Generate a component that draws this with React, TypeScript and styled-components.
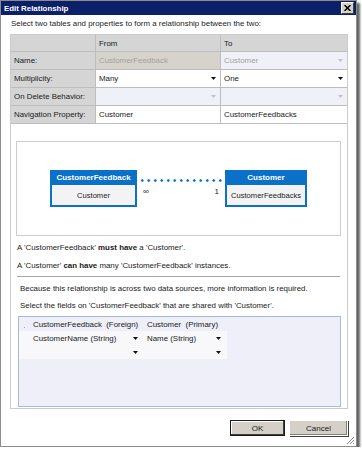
import React from 'react';
import styled, { createGlobalStyle } from 'styled-components';

const GlobalStyle = createGlobalStyle`
  html, body {
    margin: 0;
    padding: 0;
    background: #ffffff;
  }
  body {
    font-family: "Liberation Sans", Arial, sans-serif;
    font-size: 7.9px;
    color: #1a1a1a;
  }
`;

const Window = styled.div`
  width: 355px;
  height: 445px;
  background: #ffffff;
  border: 1px solid #8c8c8c;
  box-shadow: 3px 3px 2px rgba(0, 0, 0, 0.6);
  display: flex;
  flex-direction: column;
`;

const TitleBar = styled.div`
  height: 16px;
  background: #0b2068;
  color: #ffffff;
  font-weight: bold;
  font-size: 7.9px;
  display: flex;
  align-items: center;
  justify-content: space-between;
  padding: 0 2px 0 3px;
`;

const CloseButton = styled.div`
  width: 11px;
  height: 10px;
  background: #d4d0c8;
  border-top: 1px solid #ffffff;
  border-left: 1px solid #ffffff;
  border-right: 1px solid #404040;
  border-bottom: 1px solid #404040;
  display: flex;
  align-items: center;
  justify-content: center;
`;

const Body = styled.div`
  flex: 1;
  display: flex;
  flex-direction: column;
  padding: 0 8px 0 9px;
`;

const Intro = styled.div`
  line-height: 12px;
  margin-top: 3px;
  padding-left: 1px;
`;

const Panel = styled.div`
  margin-top: 4px;
  height: 373px;
  border: 1px solid #cbcbcb;
  display: flex;
  flex-direction: column;
`;

const PropTable = styled.div`
  display: grid;
  grid-template-columns: 85px 125px 1fr;
  grid-template-rows: 17px repeat(4, 18px);
`;

type Tone = 'head' | 'disabled' | 'readonly' | 'white';

const toneBg: Record<Tone, string> = {
  head: '#d5d5d5',
  disabled: '#d6d3cc',
  readonly: '#f0f0f8',
  white: '#ffffff',
};

const Cell = styled.div<{ $tone: Tone; $muted?: boolean }>`
  background: ${(p) => toneBg[p.$tone]};
  color: ${(p) => (p.$muted ? '#a3a19b' : '#1a1a1a')};
  border-right: 1px solid #bdbdbd;
  border-bottom: 1px solid #bdbdbd;
  display: flex;
  align-items: center;
  justify-content: space-between;
  padding: 0 4px 0 3px;
  white-space: nowrap;
  &:nth-child(3n) {
    border-right: none;
  }
`;

const Diagram = styled.div`
  margin: 17px 6px 0 5px;
  height: 93px;
  border: 1px solid #cdcdcd;
  display: flex;
  align-items: center;
  justify-content: center;
`;

const Entity = styled.div<{ $width: number }>`
  width: ${(p) => p.$width}px;
  height: 35px;
  background: #0a70c8;
  padding: 0 2px 2px;
  display: flex;
  flex-direction: column;
`;

const EntityTitle = styled.div`
  height: 15px;
  color: #ffffff;
  font-weight: bold;
  font-size: 8px;
  display: flex;
  align-items: center;
  justify-content: center;
`;

const EntityBody = styled.div`
  flex: 1;
  background: #f3f3f3;
  display: flex;
  align-items: center;
  justify-content: center;
  font-size: 7.6px;
  white-space: nowrap;
`;

const Connector = styled.div`
  width: 88px;
  height: 35px;
  display: flex;
  flex-direction: column;
  padding-top: 16px;
`;

const DottedLine = styled.div`
  height: 3px;
  background-image: radial-gradient(circle, #0a70c8 1px, transparent 1.5px);
  background-size: 6.5px 3px;
  background-repeat: repeat-x;
  background-position: 2px 0;
`;

const EndLabels = styled.div`
  display: flex;
  justify-content: space-between;
  padding: 5px 6px 0 6px;
  font-size: 8px;
`;

const Statement = styled.div`
  line-height: 12px;
  margin-left: 6px;
`;

const StatementGroup = styled.div`
  margin-top: 6px;
  display: flex;
  flex-direction: column;
  gap: 6px;
`;

const Separator = styled.div`
  margin: 4px 7px 0 6px;
  border-top: 1px solid #a8a8a8;
`;

const InfoGroup = styled.div`
  margin-top: 6px;
  margin-left: 9px;
  display: flex;
  flex-direction: column;
  gap: 6px;
  line-height: 11px;
`;

const MappingGrid = styled.div`
  margin: 5px 6px 0 7px;
  height: 89px;
  background: #eeeff8;
  border: 1px solid #a8bad6;
  display: grid;
  grid-template-columns: 11px 114px 83px 1fr;
  grid-template-rows: 14px 14px 14px 1fr;
`;

const MapCell = styled.div<{ $row?: boolean }>`
  background: ${(p) => (p.$row ? '#f8f8fb' : 'transparent')};
  display: flex;
  align-items: center;
  justify-content: space-between;
  padding: 0 6px 0 3px;
  white-space: nowrap;
`;

const CornerDot = styled.div`
  display: flex;
  align-items: flex-end;
  justify-content: center;
  padding-bottom: 3px;
  &::after {
    content: '';
    width: 1px;
    height: 1px;
    background: #9aa0b0;
  }
`;

const Footer = styled.div`
  display: flex;
  justify-content: flex-end;
  gap: 4px;
  margin-top: 11px;
`;

const DialogButton = styled.div<{ $primary?: boolean }>`
  width: ${(p) => (p.$primary ? 55 : 59)}px;
  height: 16px;
  box-sizing: border-box;
  background: #d4d0c8;
  border: 1px solid ${(p) => (p.$primary ? '#1a1a1a' : '#ffffff')};
  box-shadow: ${(p) =>
    p.$primary
      ? 'inset -1px -1px 0 #404040, inset 1px 1px 0 #ffffff'
      : '1px 1px 0 #404040, inset -1px -1px 0 #808080'};
  display: flex;
  align-items: center;
  justify-content: center;
  font-size: 8px;
`;

const GripRow = styled.div`
  flex: 1;
  display: flex;
  justify-content: flex-end;
  align-items: flex-end;
  padding: 0 0 1px 0;
  margin-right: -7px;
`;

const Arrow = ({ faint }: { faint?: boolean }) => (
  <svg width="5" height="3" viewBox="0 0 5 3">
    <path d="M0 0 H5 L2.5 3 Z" fill={faint ? '#c0c0c8' : '#111111'} />
  </svg>
);

const Grip = () => (
  <svg width="9" height="9" viewBox="0 0 9 9">
    <path d="M8 1 L1 8 M8 4 L4 8 M8 7 L7 8" stroke="#8a8a8a" strokeWidth="1" />
  </svg>
);

function App() {
  return (
    <>
      <GlobalStyle />
      <Window>
        <TitleBar>
          <span>Edit Relationship</span>
          <CloseButton>
            <svg width="7" height="6" viewBox="0 0 7 6">
              <path d="M0.5 0 L6.5 6 M6.5 0 L0.5 6" stroke="#000" strokeWidth="1.5" />
            </svg>
          </CloseButton>
        </TitleBar>
        <Body>
          <Intro>Select two tables and properties to form a relationship between the two:</Intro>
          <Panel>
            <PropTable>
              <Cell $tone="head" />
              <Cell $tone="head">From</Cell>
              <Cell $tone="head">To</Cell>

              <Cell $tone="head">Name:</Cell>
              <Cell $tone="disabled" $muted>CustomerFeedback</Cell>
              <Cell $tone="readonly" $muted>
                Customer <Arrow faint />
              </Cell>

              <Cell $tone="head">Multiplicity:</Cell>
              <Cell $tone="white">
                Many <Arrow />
              </Cell>
              <Cell $tone="white">
                One <Arrow />
              </Cell>

              <Cell $tone="head">On Delete Behavior:</Cell>
              <Cell $tone="readonly">
                <span /> <Arrow faint />
              </Cell>
              <Cell $tone="readonly">
                <span /> <Arrow faint />
              </Cell>

              <Cell $tone="head">Navigation Property:</Cell>
              <Cell $tone="white">Customer</Cell>
              <Cell $tone="white">CustomerFeedbacks</Cell>
            </PropTable>

            <Diagram>
              <Entity $width={83}>
                <EntityTitle>CustomerFeedback</EntityTitle>
                <EntityBody>Customer</EntityBody>
              </Entity>
              <Connector>
                <DottedLine />
                <EndLabels>
                  <span>∞</span>
                  <span>1</span>
                </EndLabels>
              </Connector>
              <Entity $width={78}>
                <EntityTitle>Customer</EntityTitle>
                <EntityBody>CustomerFeedbacks</EntityBody>
              </Entity>
            </Diagram>

            <StatementGroup>
              <Statement>
                A 'CustomerFeedback' <b>must have</b> a 'Customer'.
              </Statement>
              <Statement>
                A 'Customer' <b>can have</b> many 'CustomerFeedback' instances.
              </Statement>
            </StatementGroup>

            <Separator />

            <InfoGroup>
              <div>Because this relationship is across two data sources, more information is required.</div>
              <div>Select the fields on 'CustomerFeedback' that are shared with 'Customer'.</div>
            </InfoGroup>

            <MappingGrid>
              <CornerDot />
              <MapCell>CustomerFeedback&nbsp;&nbsp;(Foreign)</MapCell>
              <MapCell>Customer&nbsp;&nbsp;(Primary)</MapCell>
              <div />

              <MapCell $row />
              <MapCell $row>
                CustomerName (String) <Arrow />
              </MapCell>
              <MapCell $row>
                Name (String) <Arrow />
              </MapCell>
              <div />

              <MapCell $row />
              <MapCell $row>
                <span /> <Arrow />
              </MapCell>
              <MapCell $row>
                <span /> <Arrow />
              </MapCell>
              <div />
            </MappingGrid>
          </Panel>

          <Footer>
            <DialogButton $primary>OK</DialogButton>
            <DialogButton>Cancel</DialogButton>
          </Footer>
          <GripRow>
            <Grip />
          </GripRow>
        </Body>
      </Window>
    </>
  );
}

export default App;
